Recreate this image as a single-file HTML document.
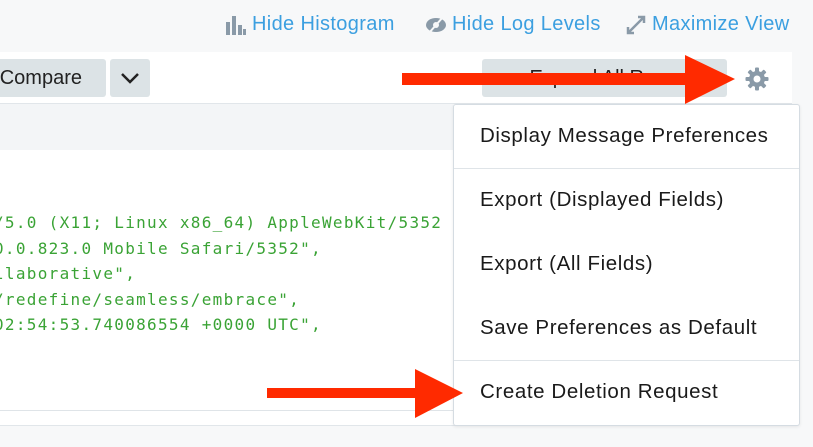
<!DOCTYPE html>
<html><head><style>
body{margin:0;width:813px;height:447px;background:#f7f8f9;position:relative;overflow:hidden;font-family:"Liberation Sans",sans-serif}
.a{position:absolute}
.link{color:#3b9fe0;font-size:20px;top:13px;letter-spacing:0.35px}
.btn{background:#dce3e6;border-radius:3px;top:59px;height:38px;font-size:20px;color:#222;line-height:38px}
.mono{font-family:"DejaVu Sans Mono",monospace;font-size:16px;letter-spacing:1.3px;color:#3aa335;left:-6px;white-space:pre}
.mi{left:480px;font-size:20.5px;letter-spacing:0.6px;color:#1a1a1a}
</style></head><body>
<svg class="a" style="left:226px;top:15px" width="20" height="20"><rect x="0" y="7" width="4" height="13" fill="#8a9aa8"/><rect x="6" y="1" width="4" height="19" fill="#8a9aa8"/><rect x="12" y="10" width="4" height="10" fill="#8a9aa8"/><rect x="17" y="14" width="3" height="6" fill="#8a9aa8"/></svg>
<div class="a link" style="left:252px">Hide Histogram</div>
<svg class="a" style="left:425px;top:15px" width="22" height="20"><ellipse cx="11" cy="10" rx="10" ry="7" fill="#8a9aa8"/><circle cx="11" cy="10" r="3" fill="#f7f8f9"/><line x1="4" y1="18" x2="18" y2="2" stroke="#f7f8f9" stroke-width="2"/></svg>
<div class="a link" style="left:452px">Hide Log Levels</div>
<svg class="a" style="left:626px;top:15px" width="20" height="20"><path d="M2 18L18 2M12 2h6v6M2 12v6h6" stroke="#8a9aa8" stroke-width="2.5" fill="none"/></svg>
<div class="a link" style="left:652px">Maximize View</div>
<div class="a" style="left:0;top:52px;width:792px;height:51px;background:#fff"></div>
<div class="a" style="left:0;top:103px;width:792px;height:46px;background:#f3f5f7;border-top:1px solid #e1e6ea;border-bottom:1px solid #e1e6ea"></div>
<div class="a" style="left:0;top:150px;width:792px;height:260px;background:#fff;border-bottom:1px solid #dfe4e8"></div>
<div class="a" style="left:0;top:411px;width:792px;height:14px;background:#fff;border-bottom:1px solid #e1e6ea"></div>
<div class="a btn" style="left:-10px;width:116px;text-align:right"><span style="margin-right:24px">Compare</span></div>
<div class="a btn" style="left:110px;width:40px"><svg width="40" height="38"><path d="M12 15l8 8 8-8" stroke="#222" stroke-width="2.5" fill="none"/></svg></div>
<div class="a btn" style="left:482px;width:245px;text-align:center">Expand All Rows</div>
<svg class="a" style="left:745px;top:67px" width="24" height="24" viewBox="0 0 24 24"><g fill="#8a9aa8"><circle cx="12" cy="12" r="8"/><g id="t"><rect x="10" y="0.5" width="4" height="23" rx="1"/></g><use href="#t" transform="rotate(45 12 12)"/><use href="#t" transform="rotate(90 12 12)"/><use href="#t" transform="rotate(135 12 12)"/></g><circle cx="12" cy="12" r="3.5" fill="#fff"/></svg>
<div class="a mono" style="top:213px">/5.0 (X11; Linux x86_64) AppleWebKit/5352</div>
<div class="a mono" style="top:239px">0.0.823.0 Mobile Safari/5352",</div>
<div class="a mono" style="top:264px">llaborative",</div>
<div class="a mono" style="top:290px">/redefine/seamless/embrace",</div>
<div class="a mono" style="top:315px">02:54:53.740086554 +0000 UTC",</div>
<div class="a mono" style="top:340px">,</div>
<div class="a" style="left:453px;top:104px;width:345px;height:320px;background:#fff;border:1px solid #d5dce2;border-radius:3px;box-shadow:0 1px 3px rgba(0,0,0,.08)"></div>
<div class="a" style="left:454px;top:168px;width:345px;height:1px;background:#dfe4e8"></div>
<div class="a" style="left:454px;top:360px;width:345px;height:1px;background:#dfe4e8"></div>
<div class="a mi" style="top:124px">Display Message Preferences</div>
<div class="a mi" style="top:188px">Export (Displayed Fields)</div>
<div class="a mi" style="top:252px">Export (All Fields)</div>
<div class="a mi" style="top:316px">Save Preferences as Default</div>
<div class="a mi" style="top:380px">Create Deletion Request</div>
<svg class="a" style="left:0;top:0" width="813" height="447"><g fill="#ff2a00"><rect x="402" y="73" width="286" height="12"/><path d="M685 55L735 79L685 104Z"/><rect x="267" y="388" width="150" height="10"/><path d="M415 369L463 393L415 418Z"/></g></svg>
</body></html>
